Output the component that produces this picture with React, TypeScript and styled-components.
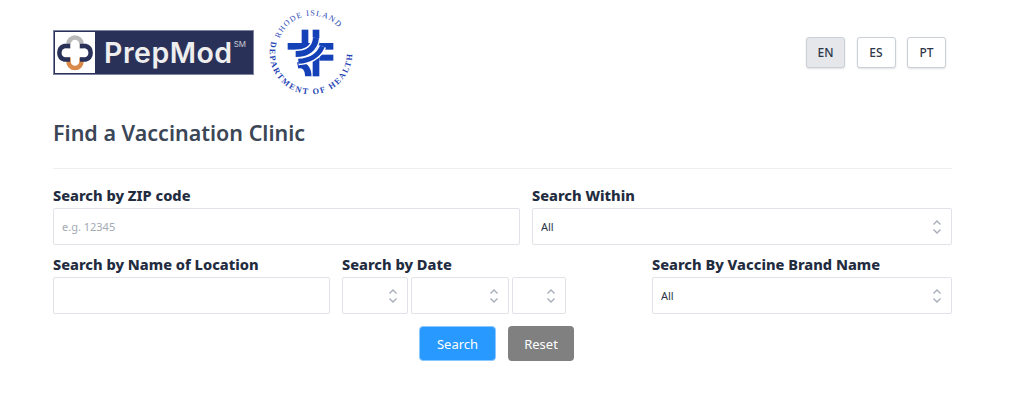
import styled, { createGlobalStyle } from "styled-components";

const GlobalStyle = createGlobalStyle`
  html, body {
    margin: 0;
    padding: 0;
    background: #fff;
    font-family: "Noto Sans", "Open Sans", sans-serif;
    color: #2d3748;
  }
  * { box-sizing: border-box; }
`;

const LANGS = ["EN", "ES", "PT"];

const BAND_TOP = "M92 138C125 138 150 122 153 90";
const BAND_MIDDLE = "M100 160C128 158 160 146 172 115";

function PrepModLogo() {
  return (
    <LogoBar>
      <LogoTile>
        <svg width="40" height="41" viewBox="0 0 40 40" fill="none">
          <path d="M13.500 16v-4.500a6.500 6.500 0 0 1 13 0V16" stroke="#b9b9b9" strokeWidth="4.500" />
          <path d="M13.500 25v4a6.500 6.500 0 0 0 13 0v-4" stroke="#d98a4b" strokeWidth="4.500" />
          <path
            d="M15 13.500h-5.500a7 7 0 0 0 0 13.500h5.500M25 13.500h5.500a7 7 0 0 1 0 13.500h-5.500"
            stroke="#2a3159"
            strokeWidth="4.500"
          />
        </svg>
      </LogoTile>
      <LogoName>PrepMod</LogoName>
      <LogoMark>SM</LogoMark>
    </LogoBar>
  );
}

function HealthSeal() {
  return (
    <svg width="95" height="95" viewBox="0 0 285 285">
      <defs>
        <path id="sealTop" d="M44 92A104 104 0 0 1 240 92" />
        <path id="sealBottom" d="M19 100A124 124 0 1 0 257 100" />
      </defs>
      <text fontFamily="Liberation Serif, serif" fontSize="24" fill="#1f45b5" letterSpacing="3.500">
        <textPath href="#sealTop">RHODE ISLAND</textPath>
      </text>
      <text fontFamily="Liberation Serif, serif" fontSize="25" fontWeight="700" fill="#1f45b5" letterSpacing="5">
        <textPath href="#sealBottom">DEPARTMENT OF HEALTH</textPath>
      </text>
      <g fill="#1440b8">
        <rect x="68" y="105" width="137" height="20" />
        <rect x="110" y="65" width="20" height="42" />
        <rect x="143" y="65" width="20" height="60" />
        <rect x="143" y="150" width="20" height="55" />
        <rect x="163" y="140" width="42" height="18" />
      </g>
      <g fill="none">
        <path d="M98 172C118 168 130 182 130 205" stroke="#1440b8" strokeWidth="19" />
        <path d={BAND_MIDDLE} stroke="#fff" strokeWidth="24" />
        <path d={BAND_TOP} stroke="#fff" strokeWidth="26" />
        <path d={BAND_MIDDLE} stroke="#1440b8" strokeWidth="15" />
        <path d={BAND_TOP} stroke="#1440b8" strokeWidth="18" />
      </g>
    </svg>
  );
}

function Chevrons() {
  return (
    <ChevronIcon width="10" height="16" viewBox="0 0 10 16" fill="none">
      <path d="M1.500 5.500 5 2l3.500 3.500M1.500 10.500 5 14l3.500-3.500" />
    </ChevronIcon>
  );
}

function SelectBox({ value, width }: { value?: string; width: number }) {
  return (
    <SelectWrap $width={width}>
      <Select defaultValue={value ?? ""}>
        <option value={value ?? ""}>{value ?? ""}</option>
      </Select>
      <Chevrons />
    </SelectWrap>
  );
}

export default function App() {
  return (
    <Page>
      <GlobalStyle />
      <Header>
        <Logos>
          <PrepModLogo />
          <HealthSeal />
        </Logos>
        <LangGroup>
          {LANGS.map((lang) => (
            <LangButton key={lang} $active={lang === "EN"}>
              {lang}
            </LangButton>
          ))}
        </LangGroup>
      </Header>
      <Title>Find a Vaccination Clinic</Title>
      <Divider />
      <Row>
        <Field $width={467}>
          <Label>Search by ZIP code</Label>
          <Input placeholder="e.g. 12345" />
        </Field>
        <Field $width={420}>
          <Label>Search Within</Label>
          <SelectBox value="All" width={420} />
        </Field>
      </Row>
      <Row>
        <Field $width={277}>
          <Label>Search by Name of Location</Label>
          <Input />
        </Field>
        <DateField>
          <Label>Search by Date</Label>
          <DateInputs>
            <SelectBox width={66} />
            <SelectBox width={98} />
            <SelectBox width={54} />
          </DateInputs>
        </DateField>
        <Field $width={300}>
          <Label>Search By Vaccine Brand Name</Label>
          <SelectBox value="All" width={300} />
        </Field>
      </Row>
      <Actions>
        <SearchButton>Search</SearchButton>
        <ResetButton>Reset</ResetButton>
      </Actions>
    </Page>
  );
}

const Page = styled.div`
  width: 1024px;
  height: 411px;
  padding: 8px 72px 0 53px;
  overflow: hidden;
`;

const Header = styled.header`
  display: flex;
  justify-content: space-between;
  align-items: flex-start;
  height: 94px;
`;

const Logos = styled.div`
  display: flex;
  align-items: flex-start;
  gap: 11px;
`;

const LogoBar = styled.div`
  display: flex;
  align-items: center;
  width: 201px;
  height: 45px;
  margin-top: 22px;
  padding: 0 2px;
  background: #2a3159;
  outline: 1px solid #7d83a0;
  outline-offset: -1px;
`;

const LogoTile = styled.div`
  display: flex;
  align-items: center;
  justify-content: center;
  width: 40px;
  height: 41px;
  background: #fff;
  flex: none;
`;

const LogoName = styled.span`
  margin-left: 9px;
  color: #eeeeee;
  font-family: Inter, sans-serif;
  font-size: 28.5px;
  font-weight: 600;
  letter-spacing: 0.5px;
`;

const LogoMark = styled.span`
  align-self: flex-start;
  margin: 9px 0 0 1px;
  color: #c9ccd6;
  font-family: Inter, sans-serif;
  font-size: 8px;
`;

const LangGroup = styled.div`
  display: flex;
  gap: 11.5px;
  margin: 29px 6px 0 0;
`;

const LangButton = styled.button<{ $active?: boolean }>`
  width: 39px;
  height: 31px;
  padding: 0;
  border: 1px solid #cbd0d8;
  border-radius: 3px;
  background: ${(p) => (p.$active ? "#e5e7eb" : "#fff")};
  box-shadow: 0 1px 2px rgba(0, 0, 0, 0.12);
  color: #2d3748;
  font-family: inherit;
  font-size: 12px;
  font-weight: 500;
`;

const Title = styled.h1`
  margin: 16px 0 0;
  color: #3b4656;
  font-size: 21.5px;
  font-weight: 600;
  line-height: 30px;
`;

const Divider = styled.hr`
  height: 1px;
  margin: 20px 0 17px;
  border: 0;
  background: #edf0f3;
`;

const Row = styled.div`
  display: flex;
  gap: 12px;
  margin-bottom: 10px;
`;

const Field = styled.div<{ $width: number }>`
  display: flex;
  flex-direction: column;
  width: ${(p) => p.$width}px;
`;

const DateField = styled.div`
  display: flex;
  flex-direction: column;
  width: 298px;
`;

const Label = styled.label`
  height: 20px;
  margin-bottom: 2px;
  color: #232c3f;
  font-size: 14.6px;
  font-weight: 800;
  line-height: 18px;
  white-space: nowrap;
`;

const Input = styled.input`
  width: 100%;
  height: 37px;
  padding: 0 8px;
  border: 1px solid #e2e3e9;
  border-radius: 2px;
  background: #fff;
  font-family: inherit;
  font-size: 11px;
  outline: none;

  &::placeholder {
    color: #a3a9b5;
    opacity: 1;
  }
`;

const DateInputs = styled.div`
  display: flex;
  gap: 3px;
`;

const SelectWrap = styled.div<{ $width: number }>`
  position: relative;
  width: ${(p) => p.$width}px;
  height: 37px;
`;

const Select = styled.select`
  appearance: none;
  width: 100%;
  height: 100%;
  padding: 0 8px;
  border: 1px solid #e2e3e9;
  border-radius: 2px;
  background: #fff;
  color: #2d3748;
  font-family: inherit;
  font-size: 11px;
  outline: none;
`;

const ChevronIcon = styled.svg`
  position: absolute;
  top: 11px;
  right: 10px;
  pointer-events: none;

  path {
    stroke: #a7adb9;
    stroke-width: 1.4;
  }
`;

const Actions = styled.div`
  display: flex;
  gap: 12px;
  margin: 12px 0 0 366px;
`;

const BaseButton = styled.button`
  height: 35px;
  padding: 0;
  border-radius: 4px;
  color: #fff;
  font-family: inherit;
  font-size: 13px;
`;

const SearchButton = styled(BaseButton)`
  width: 77px;
  border: 1px solid #8cc8ff;
  background: #2899ff;
`;

const ResetButton = styled(BaseButton)`
  width: 66px;
  border: 0;
  background: #808080;
`;
